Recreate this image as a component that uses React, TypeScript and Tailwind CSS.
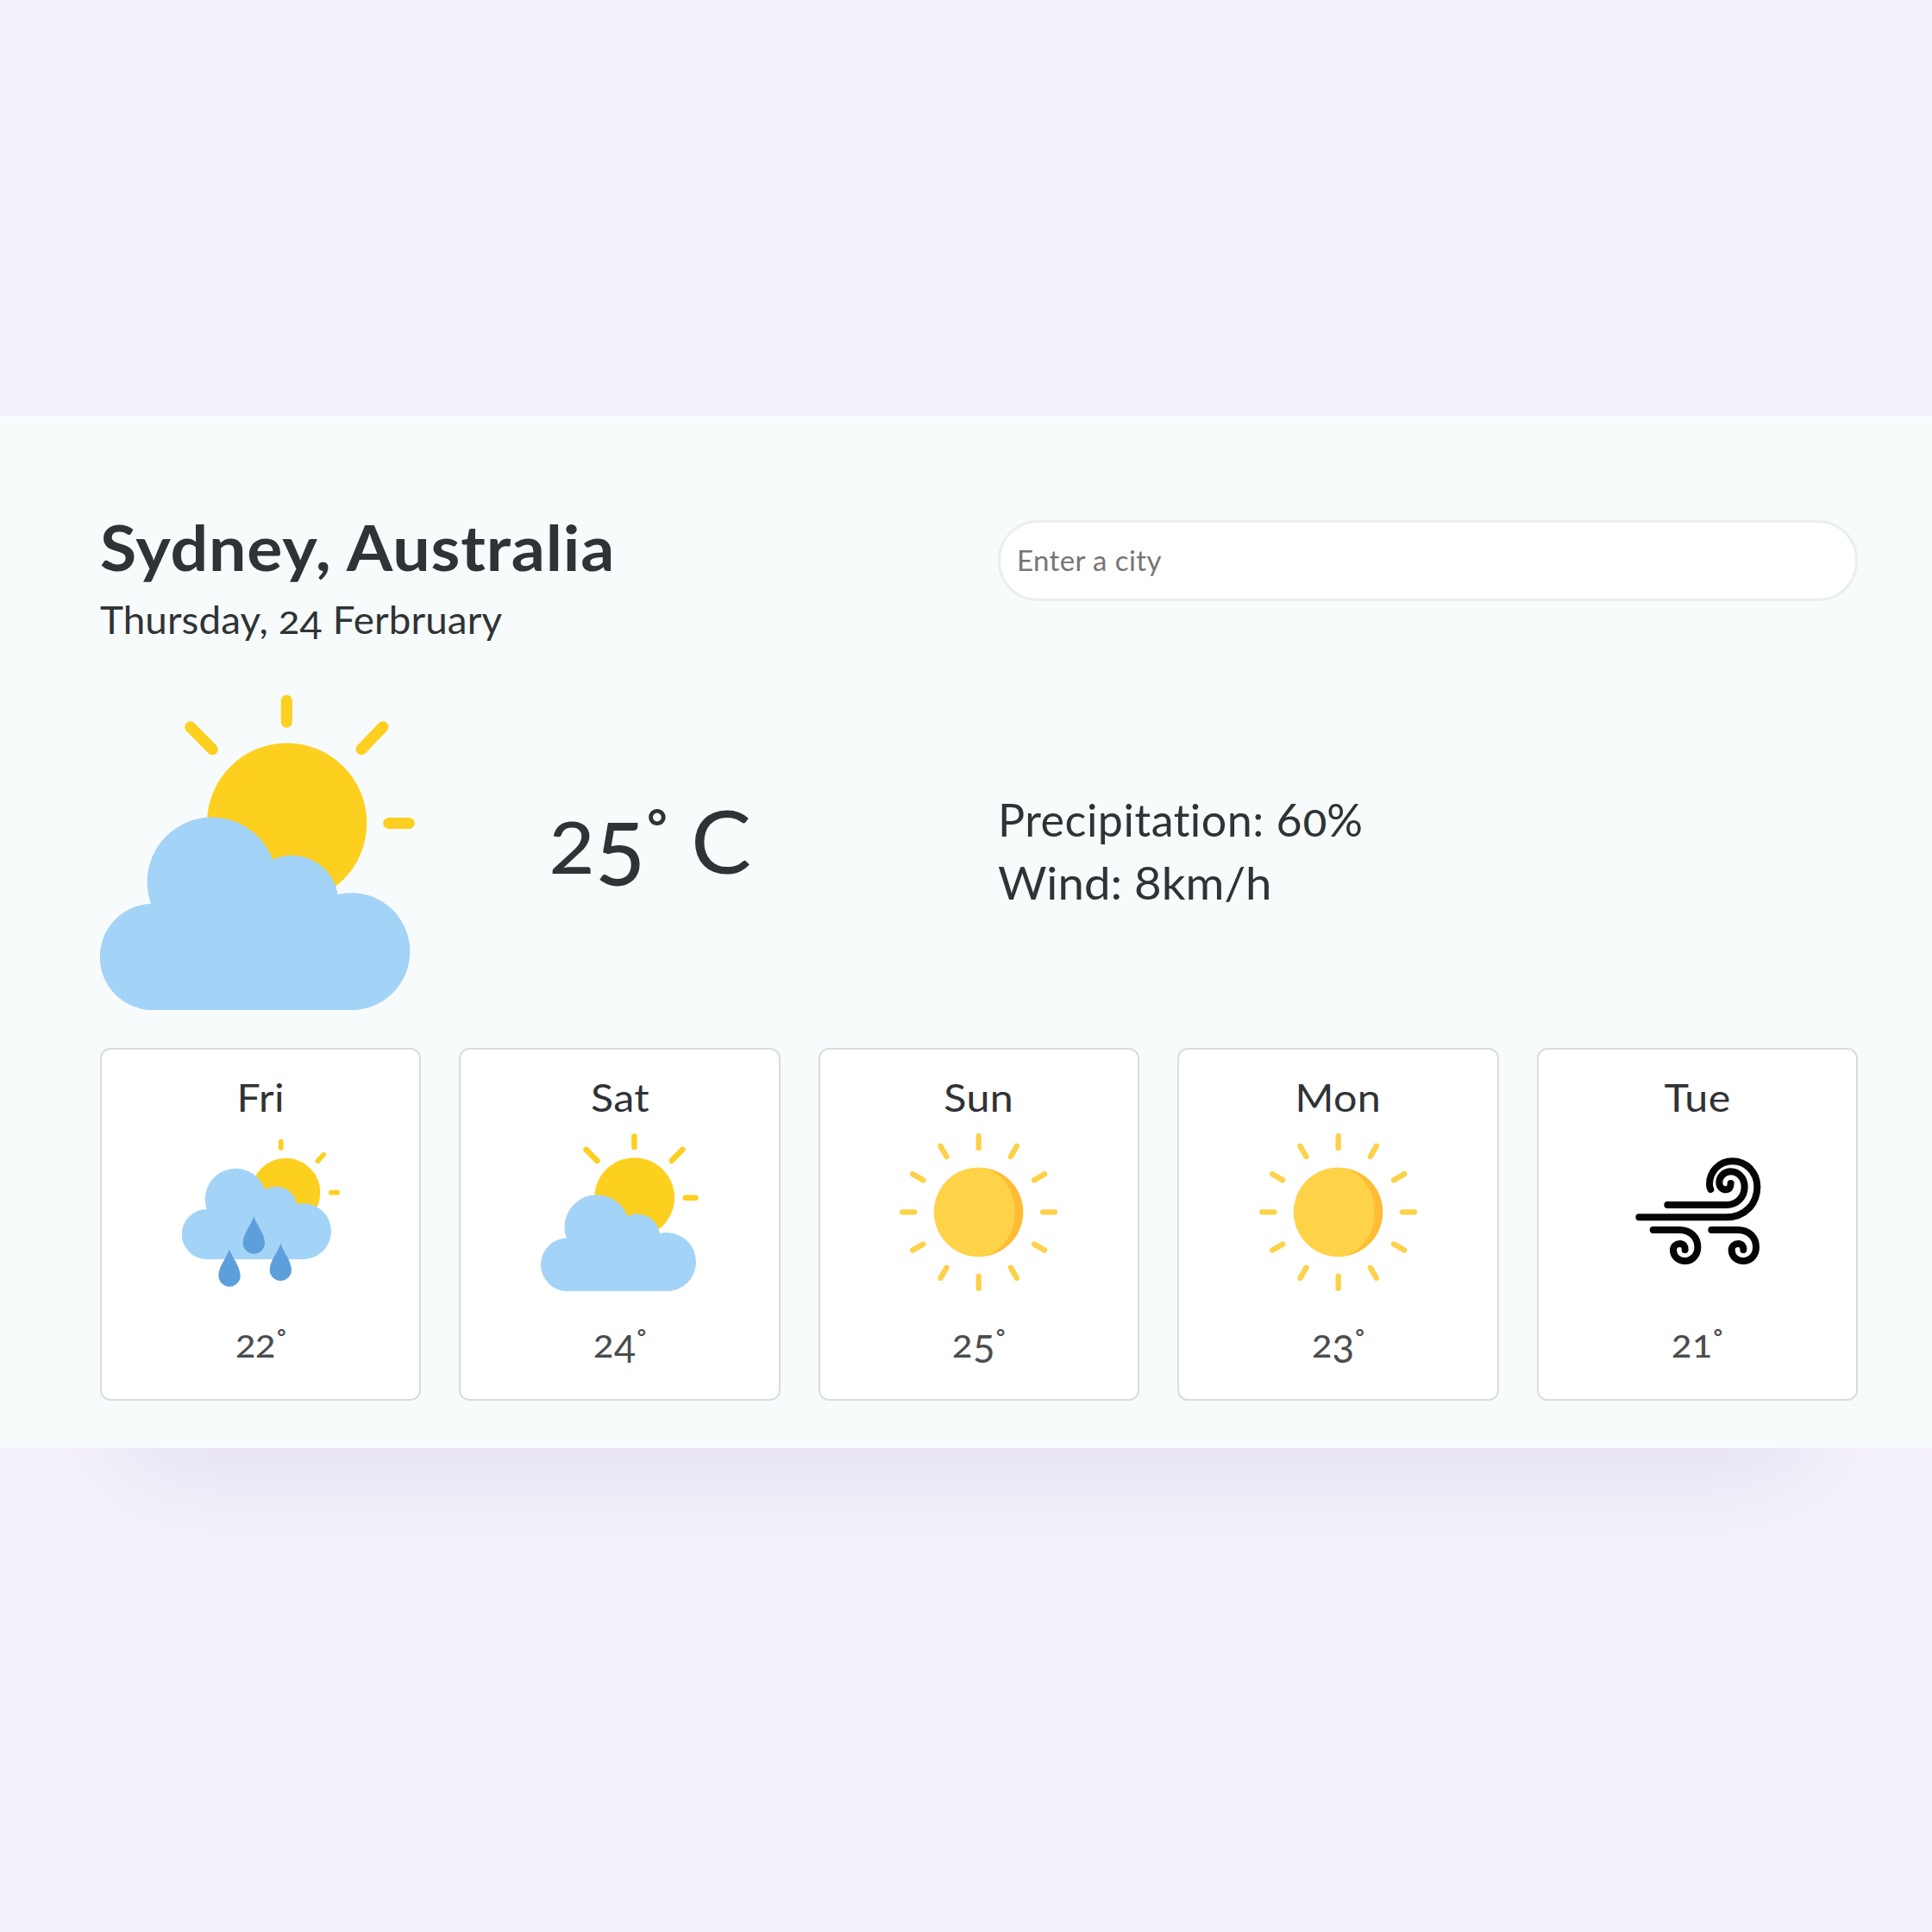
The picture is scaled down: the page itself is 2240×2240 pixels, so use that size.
import React from "react";

function PartlyCloudy({ className }: { className: string }) {
  return (
    <svg viewBox="48 45 1095 1097" className={className} aria-hidden="true">
      <g stroke="#fdd020" strokeWidth="39" strokeLinecap="round">
        <path d="M697 66V141M362 158L439 236M1032 158L957 236M1052 493H1123" />
      </g>
      <circle cx="698" cy="492" r="278" fill="#fdd020" />
      <g fill="#a3d3f7">
        <circle cx="437" cy="697" r="225" />
        <circle cx="716" cy="766" r="161" />
        <circle cx="922" cy="939" r="204" />
        <path d="M232 773H922V1143H232A185 185 0 0 1 232 773Z" />
      </g>
    </svg>
  );
}

function Drop({ x, y }: { x: number; y: number }) {
  return (
    <path
      transform={`translate(${x} ${y})`}
      fill="#5c9fdb"
      d="M0 0C8 28 38 60 38 92A38 38 0 0 1-38 92C-38 60-8 28 0 0Z"
    />
  );
}

function Rain() {
  return (
    <svg viewBox="333 339 549 549" className="size-[183px]" aria-hidden="true">
      <g stroke="#fdd020" strokeWidth="17" strokeLinecap="round">
        <path d="M677 368V390M826 413L805 435M852 545H874" />
      </g>
      <circle cx="694" cy="545" r="120" fill="#fdd020" />
      <g fill="#a3d3f7">
        <circle cx="520" cy="568" r="107" />
        <circle cx="660" cy="598" r="74" />
        <circle cx="755" cy="680" r="97" />
        <path d="M419 603H755V777H419A87 87 0 0 1 419 603Z" />
      </g>
      <Drop x={583} y={628} />
      <Drop x={498} y={742} />
      <Drop x={676} y={722} />
    </svg>
  );
}

const RAYS = [0, 30, 60, 90, 120, 150, 180, 210, 240, 270, 300, 330];

function Sun() {
  return (
    <svg viewBox="70 71 549 549" className="size-[183px]" aria-hidden="true">
      <circle cx="345" cy="345" r="155" fill="#ffbc34" />
      <path
        fill="#ffd348"
        d="M345 190C354 190 362 191 370 193C432 214 471 274 471 345C471 416 432 476 370 497C362 499 354 500 345 500A155 155 0 0 1 345 190Z"
      />
      <g stroke="#fdd148" strokeWidth="19" strokeLinecap="round">
        {RAYS.map((a) => (
          <path key={a} d="M345 80V122" transform={`rotate(${a} 345 345)`} />
        ))}
      </g>
    </svg>
  );
}

function Wind() {
  const curl =
    "M171 345H262C303 345 326 372 326 405C326 434 306 453 282 453C258 453 241 436 241 415C241 402 252 393 264 393C277 393 283 402 282 414";
  return (
    <svg viewBox="49 9 549 549" className="size-[183px]" aria-hidden="true">
      <g fill="none" stroke="#050505" strokeWidth="24" strokeLinecap="round">
        <path d="M221 258H425C465 258 489 229 489 195C489 163 467 142 441 142C418 142 401 160 401 180C401 196 412 205 424 205C436 205 441 196 441 183" />
        <path d="M122 301H425C490 301 533 255 533 195C533 143 494 106 447 106C400 106 367 143 367 186C367 194 368 198 371 204" />
        <path d={curl} />
        <path d={curl} transform="translate(203 0)" />
      </g>
    </svg>
  );
}

/** Sets figures in old-style form: 0-2 sit at x-height, 3-5, 7 and 9 descend. */
function Figures({ value }: { value: string }) {
  return (
    <>
      {value.split("").map((c, i) => {
        if ("012".includes(c))
          return (
            <span key={i} className="mx-[0.03em] inline-block scale-x-110 text-[0.83em] leading-none font-medium">
              {c}
            </span>
          );
        if ("34579".includes(c)) return <span key={i} className="align-[-0.14em] leading-[0]">{c}</span>;
        return <span key={i}>{c}</span>;
      })}
    </>
  );
}

function Degree() {
  return <span className="ml-[0.04em] align-[0.6em] text-[0.56em] leading-[0] font-bold">°</span>;
}

const DAYS = [
  { day: "Fri", temp: "22", icon: <Rain /> },
  { day: "Sat", temp: "24", icon: <PartlyCloudy className="size-[183px]" /> },
  { day: "Sun", temp: "25", icon: <Sun /> },
  { day: "Mon", temp: "23", icon: <Sun /> },
  { day: "Tue", temp: "21", icon: <Wind /> },
];

export default function App() {
  return (
    <div className="h-[2240px] w-full overflow-hidden bg-[#f4f1fd] pt-[482px] font-['Lato','Open_Sans',sans-serif] text-[#303335]">
      <main className="h-[1197px] bg-[#f7fbfc] pr-[86px] pl-[116px] shadow-[0_165px_120px_-150px_rgba(20,10,50,0.085)]">
        <header className="grid h-[323px] grid-cols-[1041px_1fr] pt-[112px]">
          <div>
            <h1 className="origin-left scale-x-[1.07] text-[72px] leading-[80px] font-bold tracking-[0.8px] whitespace-nowrap">
              Sydney, Australia
            </h1>
            <p className="mt-[18px] origin-left scale-x-[1.04] text-[44px] leading-[52px] tracking-[0.1px] whitespace-nowrap">
              Thursday, <Figures value="24" /> Ferbruary
            </p>
          </div>
          <input
            type="text"
            placeholder="Enter a city"
            className="mt-[9px] h-[94px] w-full rounded-[46px] border-[3px] border-[#e9eeef] bg-white px-[19px] pb-[2px] text-[33px] tracking-[0.4px] outline-none placeholder:text-[#757575]"
          />
        </header>

        <section className="grid h-[366px] grid-cols-[521px_520px_1fr] items-center">
          <PartlyCloudy className="h-[366px] w-[365px]" />
          <p className="-mt-[28px] text-[100px] leading-[120px] whitespace-nowrap">
            <span className="font-medium">
              <Figures value="25" />
              <Degree />
            </span>{" "}
            <span className="ml-[2px] inline-block origin-left scale-x-105">C</span>
          </p>
          <div className="-mt-[2px] text-[52px] leading-[73px] whitespace-nowrap">
            <p className="tracking-[0.5px]">
              Precipitation: <Figures value="60" />%
            </p>
            <p className="origin-left scale-x-[1.05]">Wind: 8km/h</p>
          </div>
        </section>

        <section className="mt-[44px] grid grid-cols-5 gap-[44px]">
          {DAYS.map(({ day, temp, icon }) => (
            <article
              key={day}
              className="flex h-[409px] flex-col items-center rounded-[12px] border-2 border-[#dadddf] bg-white pt-[29px]"
            >
              <h2 className="scale-x-110 text-[44px] leading-[52px] tracking-[0.3px]">{day}</h2>
              <div className="mt-[16px]">{icon}</div>
              <p className="mt-[34px] text-[44px] leading-[52px] tracking-[0.5px] text-[#4a4c4e]">
                <Figures value={temp} />
                <Degree />
              </p>
            </article>
          ))}
        </section>
      </main>
    </div>
  );
}
